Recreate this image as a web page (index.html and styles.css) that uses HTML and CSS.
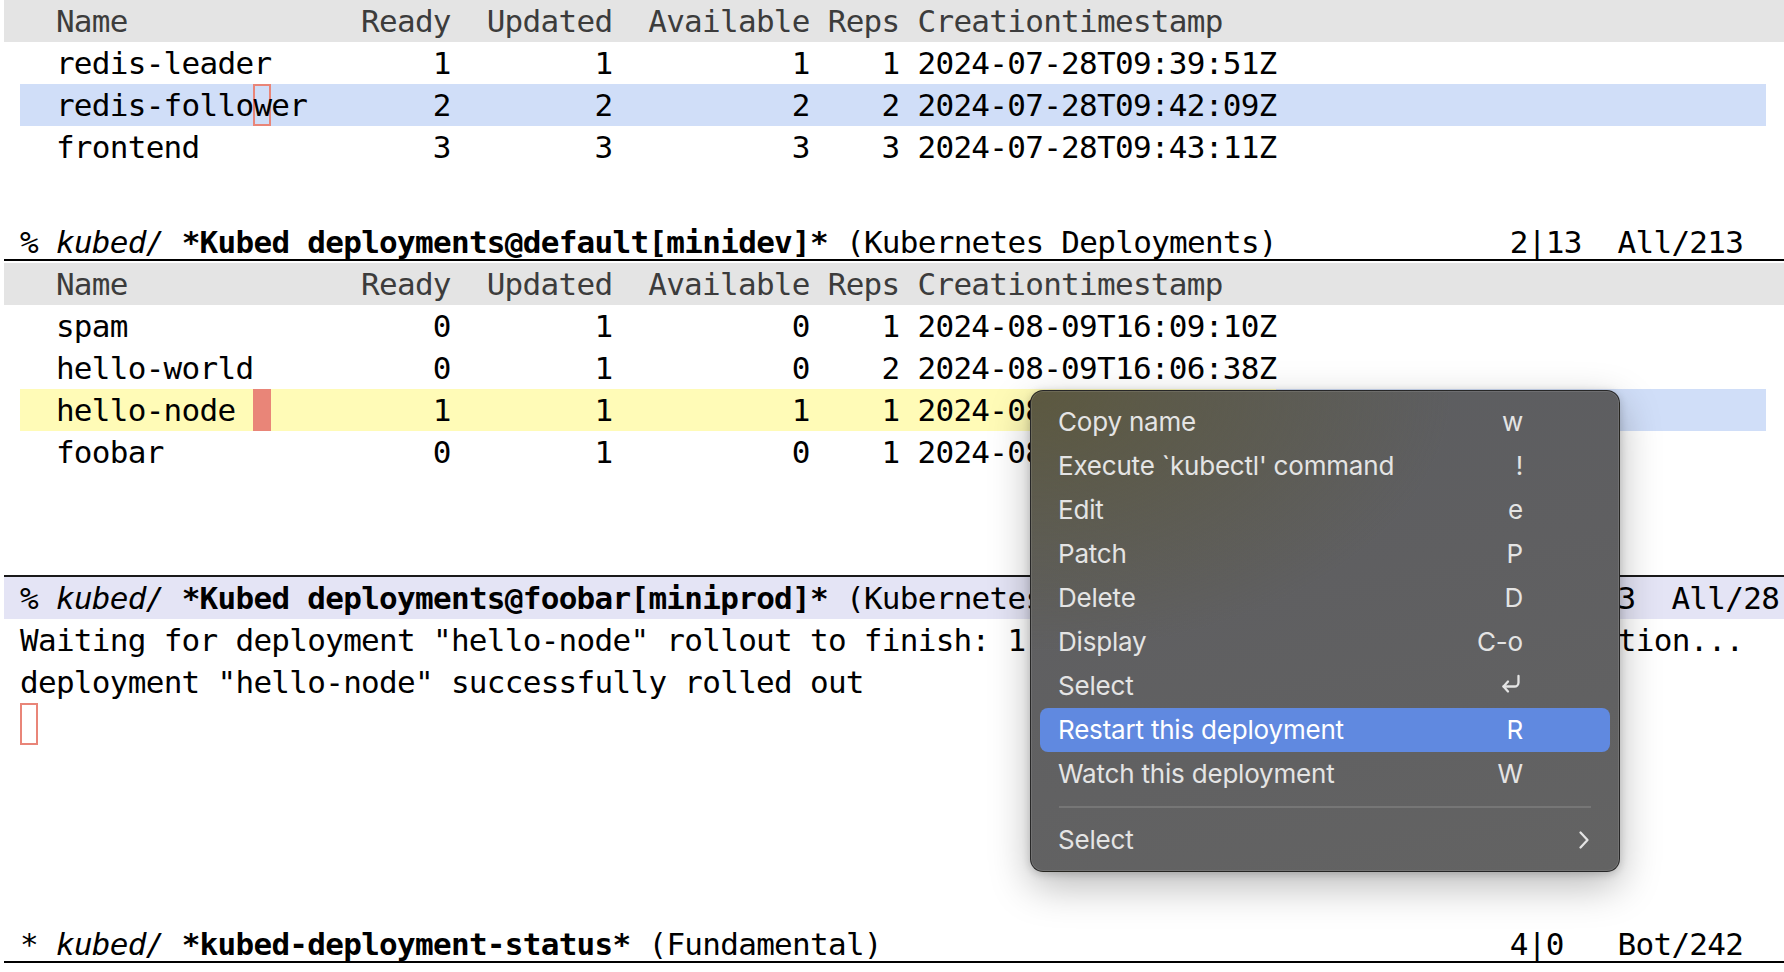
FILE: index.html
```html
<!DOCTYPE html>
<html>
<head>
<meta charset="utf-8">
<link rel="stylesheet" href="styles.css">
</head>
<body>
<div class="frame">
  <section class="win win-a">
    <div class="body">
      <div class="tr hdr"><span class="name">Name</span><span>Ready</span><span>Updated</span><span>Available</span><span>Reps</span><span class="ts">Creationtimestamp</span></div>
      <div class="tr row"><span class="name">redis-leader</span><span>1</span><span>1</span><span>1</span><span>1</span><span class="ts">2024-07-28T09:39:51Z</span></div>
      <div class="tr row sel"><span class="name">redis-follo<span class="box">w</span>er</span><span>2</span><span>2</span><span>2</span><span>2</span><span class="ts">2024-07-28T09:42:09Z</span></div>
      <div class="tr row"><span class="name">frontend</span><span>3</span><span>3</span><span>3</span><span>3</span><span class="ts">2024-07-28T09:43:11Z</span></div>
    </div>
    <div class="mode ml-line"><span class="lt">% <span class="dir">kubed/</span> <span class="buf">*Kubed deployments@default[minidev]*</span> (Kubernetes Deployments)</span><span class="rt">2|13  All/213</span></div>
  </section>

  <section class="win win-b">
    <div class="body">
      <div class="tr hdr"><span class="name">Name</span><span>Ready</span><span>Updated</span><span>Available</span><span>Reps</span><span class="ts">Creationtimestamp</span></div>
      <div class="tr row"><span class="name">spam</span><span>0</span><span>1</span><span>0</span><span>1</span><span class="ts">2024-08-09T16:09:10Z</span></div>
      <div class="tr row"><span class="name">hello-world</span><span>0</span><span>1</span><span>0</span><span>2</span><span class="ts">2024-08-09T16:06:38Z</span></div>
      <div class="tr row hl"><span class="name">hello-node <span class="cur"> </span></span><span>1</span><span>1</span><span>1</span><span>1</span><span class="ts">2024-08-09T15:58:21Z</span></div>
      <div class="tr row"><span class="name">foobar</span><span>0</span><span>1</span><span>0</span><span>1</span><span class="ts">2024-08-09T15:41:02Z</span></div>
    </div>
    <div class="mode ml-active"><span class="lt">% <span class="dir">kubed/</span> <span class="buf">*Kubed deployments@foobar[miniprod]*</span> (Kubernetes Deployments)</span><span class="rt">10|13  All/28</span></div>
  </section>

  <section class="win win-c">
    <div class="body">
      <div class="ln">Waiting for deployment "hello-node" rollout to finish: 1 old replicas are pending termination...</div>
      <div class="ln">deployment "hello-node" successfully rolled out</div>
      <div class="ln"><span class="box"> </span></div>
    </div>
    <div class="mode ml-line"><span class="lt">* <span class="dir">kubed/</span> <span class="buf">*kubed-deployment-status*</span> (Fundamental)</span><span class="rt">4|0   Bot/242</span></div>
  </section>

  <div class="menu">
    <div class="item"><span class="lbl">Copy name</span><span class="key">w</span></div>
    <div class="item"><span class="lbl">Execute `kubectl' command</span><span class="key">!</span></div>
    <div class="item"><span class="lbl">Edit</span><span class="key">e</span></div>
    <div class="item"><span class="lbl">Patch</span><span class="key">P</span></div>
    <div class="item"><span class="lbl">Delete</span><span class="key">D</span></div>
    <div class="item"><span class="lbl">Display</span><span class="key">C-o</span></div>
    <div class="item"><span class="lbl">Select</span><span class="key"><svg class="ret" width="24" height="22" viewBox="0 0 24 22"><path d="M19.5 3v6.5a4 4 0 0 1-4 4H4.5" fill="none" stroke="currentColor" stroke-width="2.3" stroke-linecap="round" stroke-linejoin="round"/><path d="M9 8.5l-4.5 5 4.5 5" fill="none" stroke="currentColor" stroke-width="2.3" stroke-linecap="round" stroke-linejoin="round"/></svg></span></div>
    <div class="item active"><span class="lbl">Restart this deployment</span><span class="key">R</span></div>
    <div class="item"><span class="lbl">Watch this deployment</span><span class="key">W</span></div>
    <div class="sep"></div>
    <div class="item"><span class="lbl">Select</span><svg class="chev" width="12" height="20" viewBox="0 0 12 20"><path d="M2.5 2.5l7 7.5-7 7.5" fill="none" stroke="currentColor" stroke-width="2.3" stroke-linecap="round" stroke-linejoin="round"/></svg></div>
  </div>
</div>
</body>
</html>
```

FILE: styles.css
```css
:root {
  --cw: 17.95px;
  --salmon: #e98578;
  --hl-blue: #d0def8;
}

html, body {
  margin: 0;
  padding: 0;
}

body {
  width: 1784px;
  height: 972px;
  overflow: hidden;
  background: #ffffff;
  color: #000000;
  font-family: "DejaVu Sans Mono", "Liberation Mono", monospace;
  font-size: 31px;
  letter-spacing: -0.71px;
  line-height: 42px;
}

.frame {
  position: relative;
  height: 972px;
  display: flex;
  flex-direction: column;
}

.win {
  display: flex;
  flex-direction: column;
}

.win-a { height: 263px; }
.win-b { height: 356px; }
.win-c { flex: 1; padding-bottom: 7px; }

.body { flex: 1; }

/* tabulated list */
.tr {
  display: grid;
  grid-template-columns:
    calc(var(--cw) * 19)
    calc(var(--cw) * 5)
    calc(var(--cw) * 9)
    calc(var(--cw) * 11)
    calc(var(--cw) * 5)
    auto;
  height: 42px;
  white-space: pre;
}

.tr > span { text-align: right; }
.tr > .name { text-align: left; padding-left: calc(var(--cw) * 2); }
.tr > .ts { text-align: left; padding-left: var(--cw); }

.hdr {
  margin-left: 4px;
  padding-left: 16px;
  background: #e4e4e4;
  color: #3c3c3c;
}

.row {
  margin-left: 20px;
  margin-right: 18px;
}

.sel { background: var(--hl-blue); }

.hl {
  background: linear-gradient(to right, #fffbb7 0, #fffbb7 1256px, var(--hl-blue) 1256px);
}

.cur {
  display: inline-block;
  width: var(--cw);
  height: 42px;
  vertical-align: top;
  background: var(--salmon);
}

.box {
  display: inline-block;
  width: var(--cw);
  height: 42px;
  vertical-align: top;
  box-shadow: inset 0 0 0 2px var(--salmon);
}

/* plain buffer lines */
.ln {
  padding-left: 20px;
  height: 42px;
  white-space: pre;
}

/* mode lines */
.mode {
  display: flex;
  height: 42px;
  margin-left: 4px;
  padding: 0 40.8px 0 16px;
  white-space: pre;
}

.mode .rt { margin-left: auto; }

.ml-line {
  background: linear-gradient(#000, #000) 0 38px / 100% 2px no-repeat;
}

.ml-active {
  background: #e4e4f5;
  border-top: 2px solid #1a1a1a;
  padding-right: 4.9px;
  overflow: hidden;
}

.dir { font-style: italic; }
.buf { font-weight: bold; }

/* context menu */
.menu {
  position: absolute;
  left: 1030px;
  top: 390px;
  width: 590px;
  box-sizing: border-box;
  padding: 9px 9px;
  border: 1px solid rgba(20, 20, 20, 0.75);
  border-radius: 13px;
  background:
    radial-gradient(ellipse 420px 260px at 0 0, rgba(92, 88, 60, 0.9), rgba(92, 88, 60, 0) 100%),
    linear-gradient(170deg, #5c5d60 0%, #5f5f61 40%, #636363 100%);
  box-shadow:
    inset 0 0 0 1px rgba(255, 255, 255, 0.10),
    0 14px 40px rgba(0, 0, 0, 0.28),
    0 2px 8px rgba(0, 0, 0, 0.18);
  font-family: "Inter", "Noto Sans", sans-serif;
  font-size: 26px;
  letter-spacing: -0.2px;
  line-height: 44px;
  color: #e4e4e4;
}

.item {
  display: flex;
  align-items: center;
  height: 44px;
  padding: 0 20px 0 18px;
  border-radius: 8px;
}

.item .lbl { flex: 1; }

.item .key {
  margin-right: 67px;
  display: flex;
  align-items: center;
}

.item.active {
  background: #6089e0;
  color: #ffffff;
}

.sep {
  height: 2px;
  margin: 10px 19px 10px 19px;
  background: #767676;
}

.ret { display: block; margin-top: -4px; }
.chev { display: block; }
```
